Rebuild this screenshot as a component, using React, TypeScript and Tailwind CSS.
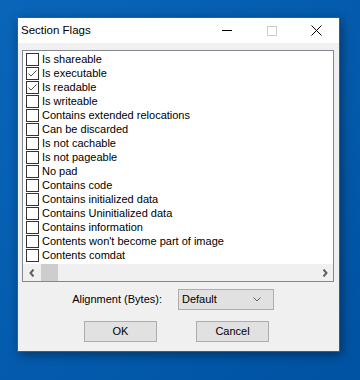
const flags: { name: string; checked: boolean }[] = [
  { name: "Is shareable", checked: false },
  { name: "Is executable", checked: true },
  { name: "Is readable", checked: true },
  { name: "Is writeable", checked: false },
  { name: "Contains extended relocations", checked: false },
  { name: "Can be discarded", checked: false },
  { name: "Is not cachable", checked: false },
  { name: "Is not pageable", checked: false },
  { name: "No pad", checked: false },
  { name: "Contains code", checked: false },
  { name: "Contains initialized data", checked: false },
  { name: "Contains Uninitialized data", checked: false },
  { name: "Contains information", checked: false },
  { name: "Contents won't become part of image", checked: false },
  { name: "Contents comdat", checked: false },
];

function Checkbox({ checked }: { checked: boolean }) {
  return (
    <div className="mt-[1px] h-[13px] w-[13px] shrink-0 border border-[#333333] bg-white">
      {checked && (
        <svg width="11" height="11" viewBox="0 0 11 11" className="block">
          <path d="M1.5 5.5 L4 8 L9.5 2.5" fill="none" stroke="#555555" strokeWidth="1" />
        </svg>
      )}
    </div>
  );
}

function TitleBar() {
  return (
    <div className="flex h-[25px] items-center bg-white">
      <span className="pl-[3px] text-[11.5px] text-black">Section Flags</span>
      <div className="ml-auto flex h-full">
        <div className="flex w-[45px] items-center justify-center">
          <div className="h-px w-[10px] bg-black" />
        </div>
        <div className="flex w-[45px] items-center justify-center">
          <div className="h-[10px] w-[10px] border border-[#cccccc]" />
        </div>
        <div className="flex w-[45px] items-center justify-center">
          <svg width="11" height="11" viewBox="0 0 11 11">
            <path d="M0.5 0.5 L10.5 10.5 M10.5 0.5 L0.5 10.5" stroke="#000" strokeWidth="1" />
          </svg>
        </div>
      </div>
    </div>
  );
}

export default function App() {
  return (
    <div
      className="h-[380px] w-[360px] overflow-hidden bg-gradient-to-br from-[#0a65b9] to-[#0052a2] pl-[17px] pt-[17px]"
      style={{ fontFamily: '"Liberation Sans", Arial, sans-serif' }}
    >
      <div className="flex h-[335px] w-[323px] flex-col border border-[#4a5968] bg-[#f0f0f0] shadow-[2px_3px_10px_rgba(0,0,0,0.4)]">
        <TitleBar />
        <div className="flex flex-col pl-[4px] pt-[7px]">
          <div className="flex h-[232px] w-[312px] flex-col border border-[#828790] bg-white">
            <div className="flex h-[213px] flex-col pt-[1px]">
              {flags.map((f, i) => (
                <div key={i} className="flex h-[14px] items-start gap-[3px] pl-[3px]">
                  <Checkbox checked={f.checked} />
                  <span className="whitespace-nowrap text-[11px] leading-[14px] text-black">{f.name}</span>
                </div>
              ))}
            </div>
            <div className="flex h-[17px] items-center bg-[#f0f0f0]">
              <div className="flex h-full w-[17px] items-center justify-center">
                <svg width="6" height="8" viewBox="0 0 6 8">
                  <path d="M4.5 0.5 L1.5 4 L4.5 7.5" fill="none" stroke="#606060" strokeWidth="2" />
                </svg>
              </div>
              <div className="ml-[1px] h-full w-[17px] bg-[#cdcdcd]" />
              <div className="ml-auto flex h-full w-[17px] items-center justify-center">
                <svg width="6" height="8" viewBox="0 0 6 8">
                  <path d="M1.5 0.5 L4.5 4 L1.5 7.5" fill="none" stroke="#606060" strokeWidth="2" />
                </svg>
              </div>
            </div>
          </div>
          <div className="mt-[7px] flex h-[21px] items-center">
            <span className="w-[140px] text-right text-[11px] text-black">Alignment (Bytes):</span>
            <div className="ml-[16px] flex h-[21px] w-[96px] items-center border border-[#adadad] bg-[#e1e1e1] pl-[3px] pr-[12px]">
              <span className="text-[11px] text-black">Default</span>
              <svg width="8" height="5" viewBox="0 0 8 5" className="ml-auto">
                <path d="M0.5 0.5 L4 4 L7.5 0.5" fill="none" stroke="#606060" strokeWidth="1" />
              </svg>
            </div>
          </div>
          <div className="mt-[11px] flex gap-[39px] pl-[62px]">
            <button className="h-[21px] w-[73px] border border-[#adadad] bg-[#e1e1e1] text-[11px] text-black">
              OK
            </button>
            <button className="h-[21px] w-[73px] border border-[#adadad] bg-[#e1e1e1] text-[11px] text-black">
              Cancel
            </button>
          </div>
        </div>
      </div>
    </div>
  );
}
